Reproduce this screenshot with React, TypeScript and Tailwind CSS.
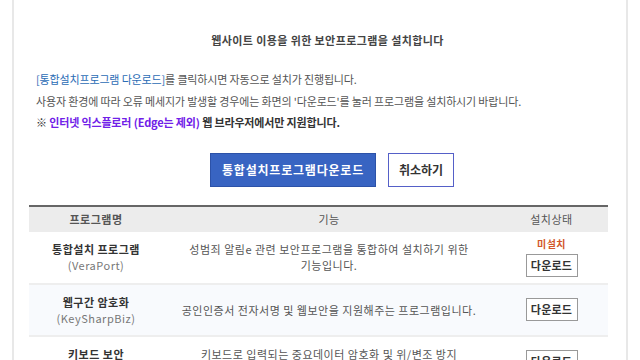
const rows = [
  {
    name: "통합설치 프로그램",
    sub: "(VeraPort)",
    desc: ["성범죄 알림e 관련 보안프로그램을 통합하여 설치하기 위한", "기능입니다."],
    status: "미설치",
    alt: false,
  },
  {
    name: "웹구간 암호화",
    sub: "(KeySharpBiz)",
    desc: ["공인인증서 전자서명 및 웹보안을 지원해주는 프로그램입니다."],
    status: "",
    alt: true,
  },
  {
    name: "키보드 보안",
    sub: "(TouchEn nxKey)",
    desc: ["키보드로 입력되는 중요데이터 암호화 및 위/변조 방지", "기능을 제공합니다."],
    status: "",
    alt: false,
  },
];

const App = () => {
  return (
    <div
      className="w-[640px] h-[360px] overflow-hidden bg-white"
      style={{ fontFamily: '"Noto Sans CJK KR", "Noto Sans", sans-serif' }}
    >
      <div className="mx-[12px] h-full border-x-2 border-[#e8e8e8]">
        <h1 className="pt-[32px] pl-[15px] text-center text-[11px] font-bold leading-[16px] tracking-[0.4px] text-[#444]">
          웹사이트 이용을 위한 보안프로그램을 설치합니다
        </h1>

        <div className="mt-[21px] pl-[22px] text-[11px] leading-[21.5px] tracking-[-0.15px] text-[#555]">
          <p>
            <span className="text-[#2b6cb5]">[통합설치프로그램 다운로드]</span>를 클릭하시면 자동으로 설치가 진행됩니다.
          </p>
          <p>사용자 환경에 따라 오류 메세지가 발생할 경우에는 화면의 '다운로드'를 눌러 프로그램을 설치하시기 바랍니다.</p>
          <p className="font-bold text-[#333]">
            ※ <span className="text-[#7020e8]">인터넷 익스플로러 (Edge는 제외)</span> 웹 브라우저에서만 지원합니다.
          </p>
        </div>

        <div className="mt-[19px] flex justify-center gap-[12px] pl-[24px]">
          <button className="h-[34px] w-[166px] border border-[#2c52a8] bg-[#3864c2] text-[12px] font-bold tracking-[0.8px] text-white">
            통합설치프로그램다운로드
          </button>
          <button className="h-[34px] w-[66px] border border-[#5560c8] bg-white text-[12px] font-bold text-[#333]">
            취소하기
          </button>
        </div>

        <table className="mx-[15px] mt-[18px] w-[579px] border-collapse text-[11px] tracking-[0.5px]">
          <thead>
            <tr className="h-[26px] border-t-2 border-[#666] bg-[#ececec] text-[#555]">
              <th className="w-[134px] font-bold">프로그램명</th>
              <th className="font-normal">기능</th>
              <th className="w-[113px] font-normal">설치상태</th>
            </tr>
          </thead>
          <tbody>
            {rows.map((r) => (
              <tr
                key={r.name}
                className={`h-[52px] border-b-2 border-[#eeeeee] ${r.alt ? "bg-[#f8fafd]" : "bg-white"}`}
              >
                <td className="text-center leading-[16px]">
                  <div className="font-bold text-[#333]">{r.name}</div>
                  <div className="text-[#777]">{r.sub}</div>
                </td>
                <td className="text-center leading-[16px] text-[#555]">
                  {r.desc.map((d) => (
                    <div key={d}>{d}</div>
                  ))}
                </td>
                <td className="text-center">
                  {r.status && (
                    <div className="mb-[3px] text-[10px] font-bold leading-[14px] text-[#d2572a]">{r.status}</div>
                  )}
                  <button className="h-[23px] w-[52px] border border-[#999] bg-white text-[11px] font-bold tracking-[0.2px] text-[#333]">
                    다운로드
                  </button>
                </td>
              </tr>
            ))}
          </tbody>
        </table>
      </div>
    </div>
  );
};

export default App;
